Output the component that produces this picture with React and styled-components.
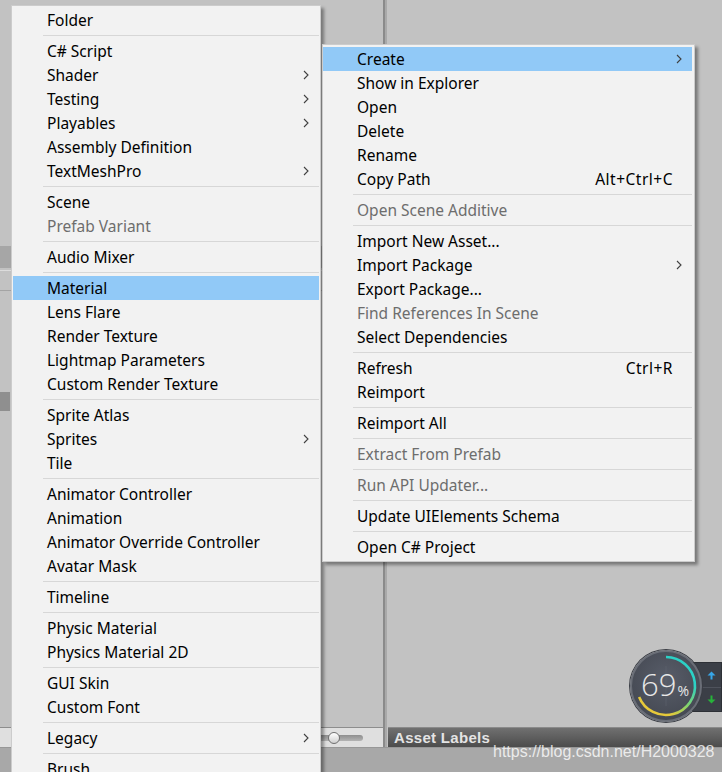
import React from 'react';
import styled, { createGlobalStyle } from 'styled-components';

const GlobalStyle = createGlobalStyle`
    html, body {
        margin: 0;
        padding: 0;
        overflow: hidden;
        background: #c2c2c2;
    }
    * {
        box-sizing: border-box;
    }
`;

const Editor = styled.div`
    position: relative;
    width: 722px;
    height: 772px;
    overflow: hidden;
    display: grid;
    grid-template-columns: 383px 4px 1fr;
    grid-template-rows: 727px 20px 1fr;
    background: #c2c2c2;
    font-family: "Noto Sans", "Open Sans", sans-serif;
`;

const ProjectPane = styled.div`
    display: flex;
    flex-direction: column;
    background: #c2c2c2;
`;

const PaneBand = styled.div`
    height: ${p => p.$h}px;
    margin-top: ${p => p.$top || 0}px;
    width: ${p => p.$w ? `${p.$w}px` : 'auto'};
    background: ${p => p.$bg};
    flex-shrink: 0;
`;

const Splitter = styled.div`
    grid-row: 1 / 3;
    grid-column: 2;
    border-left: 2px solid #8a8a8a;
    background: #a9a9a9;
`;

const InspectorPane = styled.div`
    background: #c2c2c2;
`;

const SliderBar = styled.div`
    display: flex;
    align-items: center;
    justify-content: flex-end;
    padding-right: 20px;
    background: #dfdfdf;
    border-top: 1px solid #8d8d8d;
`;

const SliderTrack = styled.div`
    position: relative;
    width: 64px;
    height: 6px;
    border-radius: 3px;
    background: linear-gradient(#8e8e8e, #b3b3b3);
`;

const SliderKnob = styled.div`
    position: absolute;
    left: 29px;
    top: -3px;
    width: 12px;
    height: 12px;
    border-radius: 50%;
    border: 1px solid #6f6f6f;
    background: linear-gradient(#ffffff, #cfcfcf);
`;

const LabelsBar = styled.div`
    display: flex;
    align-items: center;
    padding-left: 6px;
    margin-left: 1px;
    border-top: 1px solid #8a8a8a;
    background: linear-gradient(#707070, #4c4c4c);
    color: #e4e4e4;
    font-family: "Liberation Sans", Arial, sans-serif;
    font-weight: bold;
    font-size: 15px;
    letter-spacing: 0.3px;
`;

const StatusStrip = styled.div`
    grid-column: 1 / 4;
    background: #a8a8a8;
    border-top: 1px solid #979797;
`;

const Watermark = styled.div`
    position: absolute;
    left: 493px;
    top: 743px;
    font-family: "Liberation Sans", Arial, sans-serif;
    font-size: 16px;
    color: rgba(255, 255, 255, 0.78);
    white-space: nowrap;
`;

/* context menus */

const Menu = styled.div`
    position: absolute;
    left: ${p => p.$x}px;
    top: ${p => p.$y}px;
    width: ${p => p.$w}px;
    padding: ${p => p.$pad};
    background: #f2f2f2;
    border: 1px solid #cccccc;
    box-shadow: 3px 3px 3px rgba(0, 0, 0, 0.38);
    font-size: 15.5px;
    color: #000;
`;

const Row = styled.div`
    display: flex;
    align-items: center;
    height: 24px;
    padding-left: 34px;
    padding-right: ${p => p.$tail}px;
    background: ${p => p.$active ? '#91c9f7' : 'transparent'};
    color: ${p => p.$disabled ? '#6d6d6d' : '#000'};
    white-space: nowrap;
`;

const Label = styled.span`
    flex: 1;
    line-height: 24px;
`;

const Shortcut = styled.span`
    line-height: 24px;
    letter-spacing: 0.5px;
`;

const Separator = styled.div`
    height: 7px;
    display: flex;
    align-items: center;
    padding-left: 30px;

    &::after {
        content: "";
        flex: 1;
        height: 1px;
        background: #d7d7d7;
    }
`;

const Chevron = () => (
    <svg width="6" height="10" viewBox="0 0 6 10">
        <polyline points="1,1 5,5 1,9" fill="none" stroke="#404040" strokeWidth="1.1" />
    </svg>
);

const S = { sep: true };

const createItems = [
    { label: 'Folder' }, S,
    { label: 'C# Script' },
    { label: 'Shader', sub: true },
    { label: 'Testing', sub: true },
    { label: 'Playables', sub: true },
    { label: 'Assembly Definition' },
    { label: 'TextMeshPro', sub: true }, S,
    { label: 'Scene' },
    { label: 'Prefab Variant', disabled: true }, S,
    { label: 'Audio Mixer' }, S,
    { label: 'Material', active: true },
    { label: 'Lens Flare' },
    { label: 'Render Texture' },
    { label: 'Lightmap Parameters' },
    { label: 'Custom Render Texture' }, S,
    { label: 'Sprite Atlas' },
    { label: 'Sprites', sub: true },
    { label: 'Tile' }, S,
    { label: 'Animator Controller' },
    { label: 'Animation' },
    { label: 'Animator Override Controller' },
    { label: 'Avatar Mask' }, S,
    { label: 'Timeline' }, S,
    { label: 'Physic Material' },
    { label: 'Physics Material 2D' }, S,
    { label: 'GUI Skin' },
    { label: 'Custom Font' }, S,
    { label: 'Legacy', sub: true }, S,
    { label: 'Brush' },
];

const assetItems = [
    { label: 'Create', sub: true, active: true },
    { label: 'Show in Explorer' },
    { label: 'Open' },
    { label: 'Delete' },
    { label: 'Rename' },
    { label: 'Copy Path', keys: 'Alt+Ctrl+C' }, S,
    { label: 'Open Scene Additive', disabled: true }, S,
    { label: 'Import New Asset...' },
    { label: 'Import Package', sub: true },
    { label: 'Export Package...' },
    { label: 'Find References In Scene', disabled: true },
    { label: 'Select Dependencies' }, S,
    { label: 'Refresh', keys: 'Ctrl+R' },
    { label: 'Reimport' }, S,
    { label: 'Reimport All' }, S,
    { label: 'Extract From Prefab', disabled: true }, S,
    { label: 'Run API Updater...', disabled: true }, S,
    { label: 'Update UIElements Schema' }, S,
    { label: 'Open C# Project' },
];

const MenuList = ({ items }) => items.map((item, i) => {
    if (item.sep) return <Separator key={i} />;
    const tail = item.sub ? 10 : item.keys ? 19 : 0;
    return (
        <Row key={i} $active={item.active} $disabled={item.disabled} $tail={tail}>
            <Label>{item.label}</Label>
            {item.keys && <Shortcut>{item.keys}</Shortcut>}
            {item.sub && <Chevron />}
        </Row>
    );
});

/* floating performance meter */

const Meter = styled.div`
    position: absolute;
    left: 630px;
    top: 650px;
    width: 72px;
    height: 72px;
    border-radius: 50%;
    background: radial-gradient(circle at 50% 40%, #585d69, #3f434c);
    border: 2px solid #6a6e77;
    box-shadow: 0 0 0 1px #3a3d44;
    z-index: 2;
`;

const MeterText = styled.div`
    position: absolute;
    inset: 0;
    display: flex;
    align-items: baseline;
    justify-content: center;
    padding-top: 12px;
    padding-right: 2px;
    color: #e8e8e8;
    font-family: "Open Sans", sans-serif;
    font-weight: 300;
    font-size: 31px;
    line-height: 40px;

    small {
        font-size: 14px;
        font-weight: 400;
        margin-left: 1px;
    }
`;

const MeterTab = styled.div`
    position: absolute;
    left: 692px;
    top: 662px;
    width: 30px;
    height: 50px;
    display: grid;
    grid-template-rows: 1fr 1fr;
    background: #3b3f47;
    border: 1px solid #2d3036;
    z-index: 1;
`;

const TabCell = styled.div`
    display: flex;
    align-items: center;
    justify-content: center;
    padding-left: 8px;
    border-top: ${p => p.$split ? '1px solid #4f535c' : 'none'};
`;

const Arrow = ({ up, color }) => (
    <svg width="9" height="9" viewBox="0 0 9 9">
        <g transform={up ? '' : 'rotate(180 4.5 4.5)'} fill={color}>
            <polygon points="4.5,0.5 8.5,4.5 0.5,4.5" />
            <rect x="3.5" y="4" width="2" height="4.5" />
        </g>
    </svg>
);

const MeterRing = () => (
    <svg width="68" height="68" viewBox="0 0 68 68" style={{ position: 'absolute', left: 0, top: 0 }}>
        <defs>
            <linearGradient id="ringGrad" gradientUnits="userSpaceOnUse" x1="50" y1="8" x2="20" y2="64">
                <stop offset="0.25" stopColor="#2bd1c6" />
                <stop offset="0.6" stopColor="#86d46a" />
                <stop offset="0.85" stopColor="#e6c93a" />
            </linearGradient>
        </defs>
        <line x1="34" y1="14" x2="34" y2="54" stroke="#5f6470" strokeWidth="0.6" />
        <path d="M34 5 A29 29 0 1 1 7.1 44.9" fill="none" stroke="url(#ringGrad)" strokeWidth="2.6" />
    </svg>
);

const App = () => {
    return (
        <Editor>
            <GlobalStyle />
            <ProjectPane>
                <PaneBand $h={22} $top={246} $bg="#a6a6a6" />
                <PaneBand $h={1} $top={2} $bg="#dcdcdc" />
                <PaneBand $h={1} $top={19} $bg="#a4a4a4" />
                <PaneBand $h={19} $w={10} $top={101} $bg="#8f8f8f" />
            </ProjectPane>
            <Splitter />
            <InspectorPane />
            <SliderBar>
                <SliderTrack>
                    <SliderKnob />
                </SliderTrack>
            </SliderBar>
            <LabelsBar>Asset Labels</LabelsBar>
            <StatusStrip />
            <Watermark>https://blog.csdn.net/H2000328</Watermark>

            <MeterTab>
                <TabCell><Arrow up color="#37a6e8" /></TabCell>
                <TabCell $split><Arrow color="#27b23a" /></TabCell>
            </MeterTab>
            <Meter>
                <MeterRing />
                <MeterText>69<small>%</small></MeterText>
            </Meter>

            <Menu $x={11} $y={5} $w={310} $pad="2px 1px">
                <MenuList items={createItems} />
            </Menu>
            <Menu $x={322} $y={44} $w={373} $pad="2px 2px 2px 0">
                <MenuList items={assetItems} />
            </Menu>
        </Editor>
    );
};

export default App;
